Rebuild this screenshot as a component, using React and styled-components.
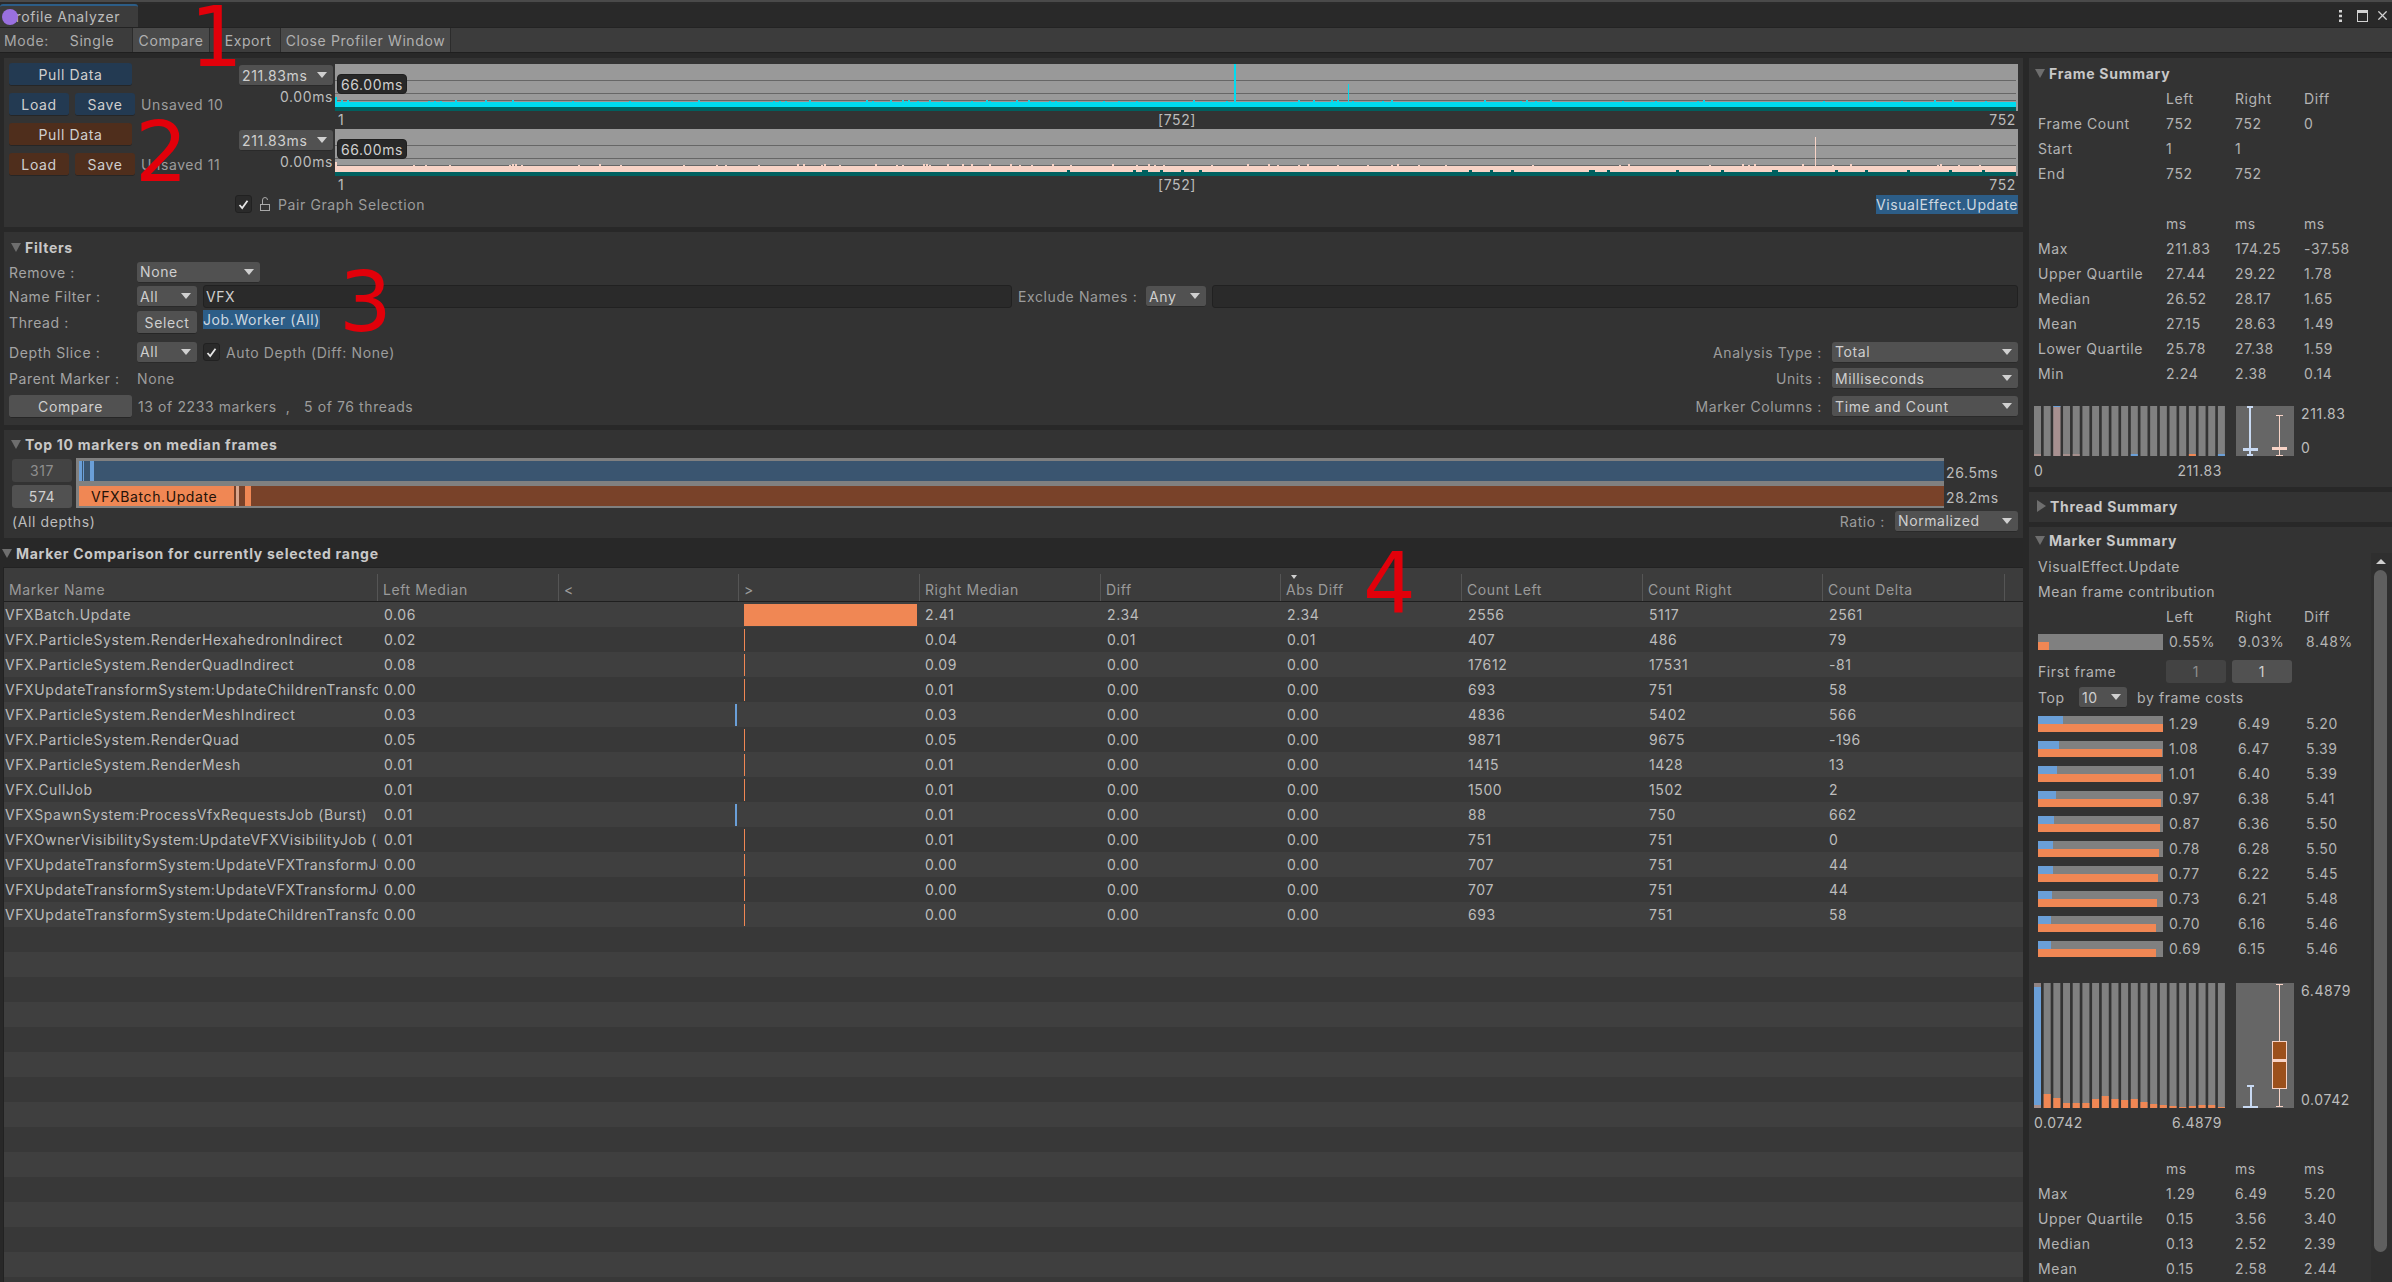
import React from "react";
import styled, { createGlobalStyle } from "styled-components";
import { X } from "lucide-react";

const TEXT = "#bcbcbc";
const BLUE = "#6a9fd8";
const ORANGE = "#f08754";
const PEACH = "#f8d3c6";
const PALE = "#c8d9f2";

const GlobalStyle = createGlobalStyle`
  html, body {
    margin: 0;
    background: #282828;
    overflow: hidden;
  }
  * { box-sizing: border-box; }
`;

const Page = styled.div`
  position: relative;
  width: 2392px;
  height: 1282px;
  overflow: hidden;
  display: flex;
  flex-direction: column;
  background: #282828;
  color: ${TEXT};
  font-family: Inter, "Liberation Sans", sans-serif;
  font-size: 14px;
  letter-spacing: 0.6px;
  white-space: nowrap;
`;

const TopEdge = styled.div`
  height: 4px;
  background: #2b2b2b;
  border-top: 2px solid #4a4a4a;
`;

const TabBar = styled.div`
  height: 23px;
  display: flex;
  align-items: stretch;
  justify-content: space-between;
  background: #292929;
`;

const Tab = styled.div`
  width: 138px;
  padding-left: 6px;
  display: flex;
  align-items: center;
  background: #3c3c3c;
  border-top: 2px solid #2c5d87;
  border-radius: 3px 3px 0 0;
`;

const WindowButtons = styled.div`
  display: flex;
  align-items: center;
  gap: 7px;
  padding-right: 2px;
  color: #d2d2d2;
`;

const Dots = styled.svg`
  margin-right: 8px;
`;

const Logo = styled.div`
  position: absolute;
  left: 2px;
  top: 9px;
  width: 16px;
  height: 16px;
  border-radius: 50%;
  background: #9a70e0;
`;

const Toolbar = styled.div`
  height: 26px;
  display: flex;
  align-items: stretch;
  background: #3c3c3c;
  border-top: 1px solid #232323;
  border-bottom: 1px solid #1f1f1f;
`;

const ToolLabel = styled.div`
  width: 52px;
  padding-left: 4px;
  display: flex;
  align-items: center;
  color: #a8a8a8;
`;

const ToolItem = styled.div`
  width: ${(p) => p.$w}px;
  padding-left: ${(p) => p.$pad || 0}px;
  display: flex;
  align-items: center;
  justify-content: center;
  background: ${(p) => (p.$on ? "#4a4a4a" : "transparent")};
  border-right: 1px solid #2c2c2c;
  color: #b0b0b0;
`;

const Body = styled.div`
  flex: 1;
  min-height: 0;
  display: flex;
`;

const LeftColumn = styled.div`
  width: 2029px;
  padding: 5px 6px 0 0;
  display: flex;
  flex-direction: column;
  gap: 5px;
`;

const Panel = styled.section`
  height: ${(p) => p.$h}px;
  margin-left: 4px;
  flex-shrink: 0;
  background: #333333;
`;

const CapturePanel = styled(Panel)`
  padding: 5px 0 0 5px;
  display: flex;
`;

const CaptureControls = styled.div`
  width: 226px;
  display: flex;
  flex-direction: column;
  gap: 7px;
`;

const ControlRow = styled.div`
  display: flex;
  align-items: center;
  gap: 6px;
  height: 23px;
`;

const Button = styled.div`
  width: ${(p) => p.$w}px;
  height: ${(p) => p.$h || 23}px;
  display: flex;
  align-items: center;
  justify-content: center;
  flex-shrink: 0;
  border-radius: 3px;
  background: ${(p) => p.$bg || "#515151"};
  border-bottom: 1px solid #262626;
  color: ${(p) => p.$color || "#cfcfcf"};
`;

const GraphColumn = styled.div`
  flex: 1;
  padding-top: 1px;
`;

const GraphBlock = styled.div`
  height: 65px;
  display: flex;
`;

const ScaleColumn = styled.div`
  width: 100px;
  padding: 1px 2px 0 2px;
  display: flex;
  flex-direction: column;
  align-items: flex-end;
  gap: 2px;
`;

const GraphArea = styled.div`
  position: relative;
  width: 1683px;
`;

const GraphCanvas = styled.svg`
  display: block;
  width: 1683px;
  height: 47px;
`;

const GraphTip = styled.div`
  position: absolute;
  left: 2px;
  top: 10px;
  height: 20px;
  padding: 0 3px;
  display: flex;
  align-items: center;
  border-radius: 4px;
  background: #282828;
  border: 1px solid #1f1f1f;
  color: #d0d0d0;
`;

const GraphAxis = styled.div`
  height: 12px;
  display: grid;
  grid-template-columns: 1fr auto 1fr;
  align-items: center;
  padding: 0 2px 0 3px;
`;

const AxisEnd = styled.span`
  justify-self: end;
`;

const PairRow = styled.div`
  height: 20px;
  margin-top: 0;
  padding-right: 5px;
  display: flex;
  align-items: center;
  gap: 8px;
`;

const Highlight = styled.span`
  height: 19px;
  display: inline-flex;
  align-items: center;
  align-self: ${(p) => (p.$raised ? "flex-start" : "center")};
  background: #2c5d87;
  color: #cfd8e0;
  margin-top: ${(p) => (p.$raised ? "1px" : "0")};
  margin-left: ${(p) => (p.$push ? "auto" : "0")};
`;

const Check = styled.div`
  width: 17px;
  height: 18px;
  display: flex;
  align-items: center;
  justify-content: center;
  flex-shrink: 0;
  border-radius: 3px;
  background: #2a2a2a;
  border: 1px solid #212121;
`;

const Dim = styled.span`
  color: #9c9c9c;
`;

const ExcludeLabel = styled(Dim)`
  width: 122px;
  flex-shrink: 0;
`;

const Select = styled.div`
  width: ${(p) => p.$w}px;
  height: ${(p) => p.$h || 21}px;
  padding: 0 6px 0 3px;
  display: flex;
  align-items: center;
  justify-content: space-between;
  flex-shrink: 0;
  border-radius: 3px;
  background: #515151;
  border-bottom: 1px solid #2a2a2a;
  color: #cfcfcf;
`;

const Caret = styled.i`
  width: 0;
  height: 0;
  border-left: 5px solid transparent;
  border-right: 5px solid transparent;
  border-top: 6px solid #d0d0d0;
`;

const FoldHeader = styled.div`
  height: ${(p) => p.$h || 22}px;
  padding-left: ${(p) => p.$pad ?? 7}px;
  display: flex;
  align-items: center;
  gap: 4px;
  font-weight: 700;
  letter-spacing: 0.72px;
  color: #c8c8c8;
`;

const Fold = styled.i`
  width: 0;
  height: 0;
  ${(p) =>
    p.$closed
      ? `border-top: 6px solid transparent; border-bottom: 6px solid transparent; border-left: 9px solid #6e6e6e;`
      : `border-left: 5px solid transparent; border-right: 5px solid transparent; border-top: 9px solid #6e6e6e;`}
`;

const FilterPanel = styled(Panel)`
  padding-top: 4px;
`;

const FilterRow = styled.div`
  height: ${(p) => p.$h}px;
  margin-top: ${(p) => p.$top || 0}px;
  padding: 0 5px;
  display: flex;
  align-items: center;
  gap: 6px;
`;

const FilterLabel = styled.div`
  width: 122px;
  color: #a4a4a4;
  flex-shrink: 0;
`;

const TextField = styled.div`
  height: 23px;
  padding-left: 2px;
  display: flex;
  align-items: center;
  flex: ${(p) => (p.$w ? `0 0 ${p.$w}px` : 1)};
  background: #2a2a2a;
  border: 1px solid #212121;
  border-radius: 3px;
  color: #cfcfcf;
`;

const RightBlock = styled.div`
  margin-left: auto;
  display: flex;
  align-items: center;
  gap: 10px;
`;

const MarkersPanel = styled(Panel)`
  padding-top: 3px;
`;

const MarkerStrip = styled.div`
  height: 50px;
  margin-top: 3px;
  padding-left: 8px;
  display: flex;
`;

const CountColumn = styled.div`
  width: 64px;
  padding-top: 1px;
  display: flex;
  flex-direction: column;
  gap: 3px;
`;

const CountBox = styled.div`
  width: 60px;
  height: 23px;
  display: flex;
  align-items: center;
  justify-content: center;
  border-radius: 3px;
  background: ${(p) => (p.$faded ? "#434343" : "#515151")};
  color: ${(p) => (p.$faded ? "#8e8e8e" : "#cfcfcf")};
`;

const StripBars = styled.div`
  width: 1868px;
  padding: 3px 0 2px 3px;
  display: flex;
  flex-direction: column;
  gap: 5px;
  background: #808080;
`;

const StripRow = styled.div`
  height: 20px;
  display: flex;
  background: ${(p) => p.$bg};
`;

const StripSegment = styled.div`
  width: ${(p) => p.$w}px;
  margin-right: ${(p) => p.$gap || 0}px;
  padding-left: ${(p) => (p.$label ? 12 : 0)}px;
  display: flex;
  align-items: center;
  flex-shrink: 0;
  background: ${(p) => p.$bg};
  color: #241208;
`;

const StripLabels = styled.div`
  padding: 3px 0 0 2px;
  display: flex;
  flex-direction: column;
  gap: 5px;
`;

const StripLabel = styled.div`
  height: 20px;
  display: flex;
  align-items: center;
  padding-top: 2px;
`;

const StripFooter = styled.div`
  height: 26px;
  padding: 0 5px 0 8px;
  display: flex;
  align-items: center;
  justify-content: space-between;
`;

const TableSection = styled.div`
  flex: 1;
  min-height: 0;
  display: flex;
  flex-direction: column;
`;

const TableTitle = styled.div`
  height: 24px;
  flex-shrink: 0;
`;

const Table = styled.div`
  flex: 1;
  min-height: 0;
  margin-left: 3px;
  overflow: hidden;
  border-top: 1px solid #222222;
  border-left: 1px solid #222222;
  background: #3c3c3c;
`;

const COLUMNS = "374px 181px 180px 181px 181px 180px 181px 181px 180px 182px 1fr";

const HeaderRow = styled.div`
  height: 34px;
  display: grid;
  grid-template-columns: ${COLUMNS};
  background: #3c3c3c;
  border-bottom: 1px solid #1f1f1f;
`;

const HeaderCell = styled.div`
  position: relative;
  margin-top: 6px;
  padding: 3px 0 0 5px;
  display: flex;
  align-items: center;
  border-right: 1px solid #555555;
  color: #9a9a9a;
`;

const SortMark = styled.i`
  position: absolute;
  left: 10px;
  top: 1px;
  width: 0;
  height: 0;
  border-left: 3px solid transparent;
  border-right: 3px solid transparent;
  border-top: 4px solid #cfcfcf;
`;

const DataRow = styled.div`
  height: 25px;
  display: grid;
  grid-template-columns: ${COLUMNS};
  background: ${(p) => (p.$odd ? "#383838" : "#3f3f3f")};
`;

const Cell = styled.div`
  padding-left: ${(p) => p.$pad ?? 6}px;
  display: flex;
  align-items: center;
  overflow: hidden;
`;

const NegativeCell = styled.div`
  padding-right: 2px;
  display: flex;
  align-items: center;
  justify-content: flex-end;
`;

const PositiveCell = styled.div`
  padding-left: 5px;
  display: flex;
  align-items: center;
`;

const DiffBar = styled.div`
  height: 22px;
  background: ${(p) => p.$color};
`;

const RightColumn = styled.div`
  flex: 1;
  padding-top: 5px;
  display: flex;
  flex-direction: column;
  gap: 5px;
`;

const SidePanel = styled.section`
  background: #333333;
  flex-shrink: 0;
`;

const FramePanel = styled(SidePanel)`
  height: 429px;
  padding-top: 5px;
`;

const ThreadPanel = styled(SidePanel)`
  padding-bottom: 2px;
`;

const MarkerPanel = styled(SidePanel)`
  flex: 1;
  min-height: 0;
  display: flex;
  flex-direction: column;
`;

const SummaryRow = styled.div`
  height: ${(p) => p.$h || 25}px;
  margin-top: ${(p) => p.$top || 0}px;
  padding-left: 9px;
  display: grid;
  grid-template-columns: 128px 69px 69px 1fr;
  align-items: center;
  color: #b4b4b4;
`;

const ValueCell = styled.div`
  padding-left: ${(p) => p.$pad || 0}px;
`;

const ChartRow = styled.div`
  margin-top: ${(p) => p.$top}px;
  padding-left: 5px;
  display: flex;
`;

const Histogram = styled.svg`
  display: block;
  width: 191px;
  height: ${(p) => p.$h}px;
`;

const BoxPlot = styled.svg`
  display: block;
  width: 58px;
  height: ${(p) => p.$h}px;
  margin-left: 11px;
  background: #666666;
`;

const BoxLabels = styled.div`
  padding-left: 7px;
  height: ${(p) => p.$h}px;
  display: flex;
  flex-direction: column;
  justify-content: space-between;
  line-height: 16px;
`;

const HistogramAxis = styled.div`
  width: 191px;
  height: 28px;
  margin-left: 5px;
  padding-right: 3px;
  display: flex;
  align-items: center;
  justify-content: space-between;
`;

const MarkerBody = styled.div`
  flex: 1;
  min-height: 0;
  display: flex;
`;

const MarkerContent = styled.div`
  flex: 1;
  min-width: 0;
  overflow: hidden;
`;

const ScrollTrack = styled.div`
  width: 21px;
  padding: 6px 4px 0 2px;
  display: flex;
  flex-direction: column;
  align-items: center;
  gap: 6px;
  background: #2f2f2f;
`;

const ScrollUp = styled.i`
  width: 0;
  height: 0;
  border-left: 5px solid transparent;
  border-right: 5px solid transparent;
  border-bottom: 5px solid #d0d0d0;
`;

const ScrollThumb = styled.div`
  width: 13px;
  height: 682px;
  border-radius: 7px;
  background: #5f5f5f;
`;

const TwinBar = styled.div`
  width: 125px;
  height: 16px;
  display: flex;
  flex-direction: column;
  background: #808080;
`;

const BarFill = styled.div`
  height: 8px;
  background: ${(p) => p.$color};
`;

const FrameInputs = styled.div`
  grid-column: 2 / 4;
  display: flex;
  gap: 6px;
`;

const FrameInput = styled.div`
  width: 60px;
  height: 23px;
  display: flex;
  align-items: center;
  justify-content: center;
  border-radius: 3px;
  background: ${(p) => (p.$faded ? "#434343" : "#515151")};
  color: ${(p) => (p.$faded ? "#8e8e8e" : "#d0d0d0")};
`;

const TopCell = styled.div`
  grid-column: 1 / 5;
  display: flex;
  align-items: center;
`;

const TopLabel = styled.span`
  width: 41px;
`;

const ByCosts = styled.span`
  margin-left: 10px;
`;

const Annotation = styled.div`
  position: absolute;
  left: ${(p) => p.$x}px;
  top: ${(p) => p.$y}px;
  font-family: "DejaVu Sans", sans-serif;
  font-size: 83px;
  line-height: 83px;
  letter-spacing: 0;
  color: #e2000a;
`;

const MARKERS = [
  ["VFXBatch.Update", "0.06", "2.41", "2.34", "2.34", "2556", "5117", "2561", "wide"],
  ["VFX.ParticleSystem.RenderHexahedronIndirect", "0.02", "0.04", "0.01", "0.01", "407", "486", "79", "pos"],
  ["VFX.ParticleSystem.RenderQuadIndirect", "0.08", "0.09", "0.00", "0.00", "17612", "17531", "-81", "pos"],
  ["VFXUpdateTransformSystem:UpdateChildrenTransformsJob (Burst)", "0.00", "0.01", "0.00", "0.00", "693", "751", "58", "pos"],
  ["VFX.ParticleSystem.RenderMeshIndirect", "0.03", "0.03", "0.00", "0.00", "4836", "5402", "566", "neg"],
  ["VFX.ParticleSystem.RenderQuad", "0.05", "0.05", "0.00", "0.00", "9871", "9675", "-196", "pos"],
  ["VFX.ParticleSystem.RenderMesh", "0.01", "0.01", "0.00", "0.00", "1415", "1428", "13", "pos"],
  ["VFX.CullJob", "0.01", "0.01", "0.00", "0.00", "1500", "1502", "2", "pos"],
  ["VFXSpawnSystem:ProcessVfxRequestsJob (Burst)", "0.01", "0.01", "0.00", "0.00", "88", "750", "662", "neg"],
  ["VFXOwnerVisibilitySystem:UpdateVFXVisibilityJob (Burst)", "0.01", "0.01", "0.00", "0.00", "751", "751", "0", "pos"],
  ["VFXUpdateTransformSystem:UpdateVFXTransformJob (Burst)", "0.00", "0.00", "0.00", "0.00", "707", "751", "44", "pos"],
  ["VFXUpdateTransformSystem:UpdateVFXTransformJob (Burst)", "0.00", "0.00", "0.00", "0.00", "707", "751", "44", "pos"],
  ["VFXUpdateTransformSystem:UpdateChildrenTransformsJob (Burst)", "0.00", "0.00", "0.00", "0.00", "693", "751", "58", "pos"],
];

const HEADERS = ["Marker Name", "Left Median", "<", ">", "Right Median", "Diff", "Abs Diff", "Count Left", "Count Right", "Count Delta"];

const FRAME_STATS = [
  ["Max", "211.83", "174.25", "-37.58"],
  ["Upper Quartile", "27.44", "29.22", "1.78"],
  ["Median", "26.52", "28.17", "1.65"],
  ["Mean", "27.15", "28.63", "1.49"],
  ["Lower Quartile", "25.78", "27.38", "1.59"],
  ["Min", "2.24", "2.38", "0.14"],
];

const MARKER_STATS = [
  ["Max", "1.29", "6.49", "5.20"],
  ["Upper Quartile", "0.15", "3.56", "3.40"],
  ["Median", "0.13", "2.52", "2.39"],
  ["Mean", "0.15", "2.58", "2.44"],
];

const FRAME_COSTS = [
  [25, 125, "1.29", "6.49", "5.20"],
  [21, 124, "1.08", "6.47", "5.39"],
  [19, 123, "1.01", "6.40", "5.39"],
  [18, 123, "0.97", "6.38", "5.41"],
  [16, 122, "0.87", "6.36", "5.50"],
  [15, 121, "0.78", "6.28", "5.50"],
  [15, 120, "0.77", "6.22", "5.45"],
  [14, 119, "0.73", "6.21", "5.48"],
  [13, 118, "0.70", "6.16", "5.46"],
  [13, 118, "0.69", "6.15", "5.46"],
];

// small seeded generator so the graph noise stays the same on every load
function noise(seed) {
  let s = seed;
  return () => {
    s = (s * 16807) % 2147483647;
    return s / 2147483647;
  };
}

function FrameGraph({ fill, baseTop, baseBottom, spikes, seed, chewed }) {
  const rand = noise(seed);
  const bumps = [];
  for (let x = 0; x < 1683; x += 3) {
    const r = rand();
    if (r > 0.9) bumps.push([x, baseTop - 1 - Math.floor(rand() * 2), 2]);
    if (chewed && x > 700 && r < 0.06) bumps.push([x, null, 3]);
  }
  return (
    <GraphCanvas viewBox="0 0 1683 47">
      <rect width="1683" height="47" fill="#999999" />
      {[16, 29, 36].map((y) => (
        <rect key={y} y={y} width="1681" height="1" fill="#666666" />
      ))}
      <rect y={baseTop} width="1681" height={baseBottom - baseTop} fill={fill} />
      <rect y={baseBottom} width="1681" height={47 - baseBottom} fill="#00605f" />
      {bumps.map(([x, top, w], i) =>
        top === null ? (
          <rect key={i} x={x} y={baseBottom - 2} width={w} height="2" fill="#00605f" />
        ) : (
          <rect key={i} x={x} y={top} width={w} height={baseTop - top} fill={fill} />
        )
      )}
      {spikes.map(([x, top, w]) => (
        <rect key={x} x={x} y={top} width={w} height={baseTop - top} fill={fill} />
      ))}
    </GraphCanvas>
  );
}

function CheckMark() {
  return (
    <svg width="11" height="11" viewBox="0 0 11 11">
      <path d="M1.5 6 L4.2 9 L9.5 1.8" fill="none" stroke="#e6e6e6" strokeWidth="1.8" />
    </svg>
  );
}

function LockIcon() {
  return (
    <svg width="10" height="14" viewBox="0 0 10 14">
      <rect x="0.5" y="7.5" width="9" height="6" fill="none" stroke="#a8a8a8" />
      <path d="M2.5 7 V3 A2.5 2.5 0 0 1 7.5 3" fill="none" stroke="#a8a8a8" />
    </svg>
  );
}

function DotsIcon() {
  return (
    <Dots width="3" height="12" viewBox="0 0 3 12">
      <rect width="3" height="2.5" fill="#d2d2d2" />
      <rect y="4.7" width="3" height="2.5" fill="#d2d2d2" />
      <rect y="9.5" width="3" height="2.5" fill="#d2d2d2" />
    </Dots>
  );
}

function MaximiseIcon() {
  return (
    <svg width="11" height="12" viewBox="0 0 11 12">
      <rect x="0.5" y="0.5" width="10" height="11" fill="none" stroke="#d2d2d2" />
      <rect width="11" height="3" fill="#d2d2d2" />
    </svg>
  );
}

function Bars({ height, bars }) {
  return (
    <Histogram $h={height} viewBox={`0 0 191 ${height}`}>
      {bars.map((segments, i) => {
        const x = i * 9.68;
        return (
          <g key={i}>
            <rect x={x} width="7" height={height} fill="#808080" />
            {segments.map(([y, h, color], k) => (
              <rect key={k} x={x} y={y} width="7" height={h} fill={color} />
            ))}
          </g>
        );
      })}
    </Histogram>
  );
}

const bottomSeg = (h, color, total) => [[total - h, h, color]];
const PINK = "#a68f8c";

const FRAME_HIST = Array.from({ length: 20 }, (_, i) => {
  if (i === 0 || i === 3 || i === 4) return bottomSeg(2, PINK, 50);
  if (i === 2) return [[0, 50, "#a89090"], [0, 1, BLUE]];
  if (i === 10 || i === 19) return bottomSeg(2, BLUE, 50);
  if (i === 16) return bottomSeg(2, ORANGE, 50);
  return [];
});

const COST_TOPS = [0, 14, 10, 5, 5, 5, 9, 12, 9, 8, 9, 6, 4, 3, 2, 1, 2, 3, 3, 1];
const COST_HIST = COST_TOPS.map((h, i) =>
  i === 0
    ? [[0, 4, "#8f8383"], [4, 118, BLUE], [122, 3, PINK]]
    : bottomSeg(h, ORANGE, 125)
);

function FramePlot() {
  return (
    <BoxPlot $h={50} viewBox="0 0 58 50">
      <rect x="13" width="2" height="50" fill={PALE} />
      <rect x="11" width="6" height="2" fill={PALE} />
      <rect x="11" y="48" width="6" height="2" fill={PALE} />
      <rect x="7" y="42" width="15" height="3" fill={PALE} />
      <rect x="43" y="9" width="1" height="41" fill={PEACH} />
      <rect x="40" y="9" width="7" height="1" fill={PEACH} />
      <rect x="40" y="49" width="7" height="1" fill={PEACH} />
      <rect x="36" y="41" width="15" height="3" fill={PEACH} />
    </BoxPlot>
  );
}

function CostPlot() {
  return (
    <BoxPlot $h={125} viewBox="0 0 58 125">
      <rect x="14" y="102" width="2" height="22" fill={PALE} />
      <rect x="11" y="102" width="7" height="2" fill={PALE} />
      <rect x="7" y="123" width="15" height="2" fill={PALE} />
      <rect x="43" y="1" width="1" height="123" fill={PEACH} />
      <rect x="40" y="1" width="7" height="1" fill={PEACH} />
      <rect x="40" y="123" width="7" height="1" fill={PEACH} />
      <rect x="36.5" y="58.5" width="14" height="47" fill="#9c501c" stroke={PEACH} />
      <rect x="36" y="76" width="15" height="3" fill={PEACH} />
    </BoxPlot>
  );
}

function Dropdown({ label, w, h }) {
  return (
    <Select $w={w} $h={h}>
      {label}
      <Caret />
    </Select>
  );
}

function GraphSection({ fill, baseTop, baseBottom, spikes, seed, chewed }) {
  return (
    <GraphBlock>
      <ScaleColumn>
        <Dropdown label="211.83ms" w={94} />
        <span>0.00ms</span>
      </ScaleColumn>
      <GraphArea>
        <FrameGraph
          fill={fill}
          baseTop={baseTop}
          baseBottom={baseBottom}
          spikes={spikes}
          seed={seed}
          chewed={chewed}
        />
        <GraphTip>66.00ms</GraphTip>
        <GraphAxis>
          <span>1</span>
          <span>[752]</span>
          <AxisEnd>752</AxisEnd>
        </GraphAxis>
      </GraphArea>
    </GraphBlock>
  );
}

function CapturePanelContent() {
  return (
    <CapturePanel $h={169}>
      <CaptureControls>
        <Button $w={123} $bg="#233a52">Pull Data</Button>
        <ControlRow>
          <Button $w={60} $bg="#233a52">Load</Button>
          <Button $w={60} $bg="#233a52">Save</Button>
          <Dim>Unsaved 10</Dim>
        </ControlRow>
        <Button $w={123} $bg="#4f2e1c">Pull Data</Button>
        <ControlRow>
          <Button $w={60} $bg="#4f2e1c">Load</Button>
          <Button $w={60} $bg="#4f2e1c">Save</Button>
          <Dim>Unsaved 11</Dim>
        </ControlRow>
      </CaptureControls>
      <GraphColumn>
        <GraphSection
          fill="#00dcf0"
          baseTop={38}
          baseBottom={43}
          seed={41}
          spikes={[[0, 33, 2], [899, 0, 2], [1013, 20, 1]]}
        />
        <GraphSection
          fill={PEACH}
          baseTop={37}
          baseBottom={43}
          seed={97}
          chewed
          spikes={[[0, 33, 2], [1480, 8, 1]]}
        />
        <PairRow>
          <Check><CheckMark /></Check>
          <LockIcon />
          <Dim>Pair Graph Selection</Dim>
          <Highlight $push>VisualEffect.Update</Highlight>
        </PairRow>
      </GraphColumn>
    </CapturePanel>
  );
}

function FiltersPanelContent() {
  return (
    <FilterPanel $h={193}>
      <FoldHeader><Fold /> Filters</FoldHeader>
      <FilterRow $h={24} $top={2}>
        <FilterLabel>Remove :</FilterLabel>
        <Dropdown label="None" w={123} />
      </FilterRow>
      <FilterRow $h={25}>
        <FilterLabel>Name Filter :</FilterLabel>
        <Dropdown label="All" w={60} />
        <TextField $w={809}>VFX</TextField>
        <ExcludeLabel>Exclude Names :</ExcludeLabel>
        <Dropdown label="Any" w={60} />
        <TextField>&nbsp;</TextField>
      </FilterRow>
      <FilterRow $h={27}>
        <FilterLabel>Thread :</FilterLabel>
        <Button $w={60}>Select</Button>
        <Highlight $raised>Job.Worker (All)</Highlight>
      </FilterRow>
      <FilterRow $h={24} $top={4}>
        <FilterLabel>Depth Slice :</FilterLabel>
        <Dropdown label="All" w={60} />
        <Check><CheckMark /></Check>
        <Dim>Auto Depth (Diff: None)</Dim>
        <RightBlock>
          <Dim>Analysis Type :</Dim>
          <Dropdown label="Total" w={186} />
        </RightBlock>
      </FilterRow>
      <FilterRow $h={29}>
        <FilterLabel>Parent Marker :</FilterLabel>
        <Dim>None</Dim>
        <RightBlock>
          <Dim>Units :</Dim>
          <Dropdown label="Milliseconds" w={186} />
        </RightBlock>
      </FilterRow>
      <FilterRow $h={27}>
        <Button $w={123}>Compare</Button>
        <Dim>13 of 2233 markers &nbsp;, &nbsp;&nbsp;5 of 76 threads</Dim>
        <RightBlock>
          <Dim>Marker Columns :</Dim>
          <Dropdown label="Time and Count" w={186} />
        </RightBlock>
      </FilterRow>
    </FilterPanel>
  );
}

function TopMarkersPanel() {
  return (
    <MarkersPanel $h={108}>
      <FoldHeader $h={22}><Fold /> Top 10 markers on median frames</FoldHeader>
      <MarkerStrip>
        <CountColumn>
          <CountBox $faded>317</CountBox>
          <CountBox>574</CountBox>
        </CountColumn>
        <StripBars>
          <StripRow $bg="#3a5570">
            <StripSegment $w={3} $gap={1} $bg={BLUE} />
            <StripSegment $w={1} $gap={6} $bg={BLUE} />
            <StripSegment $w={4} $bg={BLUE} />
          </StripRow>
          <StripRow $bg="#794229">
            <StripSegment $label $w={155} $gap={2} $bg={ORANGE}>VFXBatch.Update</StripSegment>
            <StripSegment $w={3} $gap={6} $bg="#d9a58c" />
            <StripSegment $w={6} $bg={ORANGE} />
          </StripRow>
        </StripBars>
        <StripLabels>
          <StripLabel>26.5ms</StripLabel>
          <StripLabel>28.2ms</StripLabel>
        </StripLabels>
      </MarkerStrip>
      <StripFooter>
        <span>(All depths)</span>
        <RightBlock>
          <Dim>Ratio :</Dim>
          <Dropdown label="Normalized" w={123} />
        </RightBlock>
      </StripFooter>
    </MarkersPanel>
  );
}

function MarkerTable() {
  const blanks = Array.from({ length: 15 });
  return (
    <Table>
      <HeaderRow>
        {HEADERS.map((h) => (
          <HeaderCell key={h}>
            {h === "Abs Diff" && <SortMark />}
            {h}
          </HeaderCell>
        ))}
      </HeaderRow>
      {MARKERS.map(([name, left, right, diff, abs, cl, cr, cd, bar], i) => (
        <DataRow key={i} $odd={i % 2 === 1}>
          <Cell $pad={1}>{name}</Cell>
          <Cell>{left}</Cell>
          <NegativeCell>{bar === "neg" && <DiffBar $color={BLUE} style={{ width: 2 }} />}</NegativeCell>
          <PositiveCell>
            {bar === "wide" && <DiffBar $color={ORANGE} style={{ width: 173 }} />}
            {bar === "pos" && <DiffBar $color={ORANGE} style={{ width: 1 }} />}
          </PositiveCell>
          <Cell $pad={5}>{right}</Cell>
          <Cell>{diff}</Cell>
          <Cell>{abs}</Cell>
          <Cell>{cl}</Cell>
          <Cell>{cr}</Cell>
          <Cell>{cd}</Cell>
          <Cell />
        </DataRow>
      ))}
      {blanks.map((_, i) => (
        <DataRow key={i} $odd={(i + MARKERS.length) % 2 === 1} />
      ))}
    </Table>
  );
}

function StatRows({ rows }) {
  return rows.map((row) => (
    <SummaryRow key={row[0]}>
      {row.map((v) => (
        <span key={v}>{v}</span>
      ))}
    </SummaryRow>
  ));
}

function ColumnHeads({ labels }) {
  return (
    <SummaryRow>
      <span />
      {labels.map((l, i) => (
        <span key={i}>{l}</span>
      ))}
    </SummaryRow>
  );
}

function FrameSummary() {
  return (
    <FramePanel>
      <FoldHeader $h={20} $pad={6}><Fold /> Frame Summary</FoldHeader>
      <SummaryRow $h={3} />
      <ColumnHeads labels={["Left", "Right", "Diff"]} />
      <StatRows rows={[["Frame Count", "752", "752", "0"]]} />
      <SummaryRow>
        <span>Start</span>
        <span>1</span>
        <span>1</span>
      </SummaryRow>
      <SummaryRow>
        <span>End</span>
        <span>752</span>
        <span>752</span>
      </SummaryRow>
      <SummaryRow />
      <ColumnHeads labels={["ms", "ms", "ms"]} />
      <StatRows rows={FRAME_STATS} />
      <ChartRow $top={20}>
        <Bars height={50} bars={FRAME_HIST} />
        <FramePlot />
        <BoxLabels $h={50}>
          <span>211.83</span>
          <span>0</span>
        </BoxLabels>
      </ChartRow>
      <HistogramAxis>
        <span>0</span>
        <span>211.83</span>
      </HistogramAxis>
    </FramePanel>
  );
}

function MarkerSummary() {
  return (
    <MarkerPanel>
      <FoldHeader $h={26} $pad={6}><Fold /> Marker Summary</FoldHeader>
      <MarkerBody>
        <MarkerContent>
          <SummaryRow $h={1} />
          <SummaryRow><TopCell>VisualEffect.Update</TopCell></SummaryRow>
          <SummaryRow><TopCell>Mean frame contribution</TopCell></SummaryRow>
          <ColumnHeads labels={["Left", "Right", "Diff"]} />
          <SummaryRow>
            <TwinBar>
              <BarFill $color="transparent" />
              <BarFill $color={ORANGE} style={{ width: 11 }} />
            </TwinBar>
            <ValueCell $pad={3}>0.55%</ValueCell>
            <ValueCell $pad={3}>9.03%</ValueCell>
            <ValueCell $pad={2}>8.48%</ValueCell>
          </SummaryRow>
          <SummaryRow $top={5}>
            <span>First frame</span>
            <FrameInputs>
              <FrameInput $faded>1</FrameInput>
              <FrameInput>1</FrameInput>
            </FrameInputs>
          </SummaryRow>
          <SummaryRow $h={27}>
            <TopCell>
              <TopLabel>Top</TopLabel>
              <Dropdown label="10" w={48} />
              <ByCosts>by frame costs</ByCosts>
            </TopCell>
          </SummaryRow>
          {FRAME_COSTS.map(([blue, orange, left, right, diff]) => (
            <SummaryRow key={left}>
              <TwinBar>
                <BarFill $color={BLUE} style={{ width: blue }} />
                <BarFill $color={ORANGE} style={{ width: orange }} />
              </TwinBar>
              <ValueCell $pad={3}>{left}</ValueCell>
              <ValueCell $pad={3}>{right}</ValueCell>
              <ValueCell $pad={2}>{diff}</ValueCell>
            </SummaryRow>
          ))}
          <ChartRow $top={22}>
            <Bars height={125} bars={COST_HIST} />
            <CostPlot />
            <BoxLabels $h={125}>
              <span>6.4879</span>
              <span>0.0742</span>
            </BoxLabels>
          </ChartRow>
          <HistogramAxis>
            <span>0.0742</span>
            <span>6.4879</span>
          </HistogramAxis>
          <SummaryRow $h={20} />
          <ColumnHeads labels={["ms", "ms", "ms"]} />
          <StatRows rows={MARKER_STATS} />
        </MarkerContent>
        <ScrollTrack>
          <ScrollUp />
          <ScrollThumb />
        </ScrollTrack>
      </MarkerBody>
    </MarkerPanel>
  );
}

export default function App() {
  return (
    <Page>
      <GlobalStyle />
      <TopEdge />
      <TabBar>
        <Tab>Profile Analyzer</Tab>
        <WindowButtons>
          <DotsIcon />
          <MaximiseIcon />
          <X size={15} strokeWidth={2} />
        </WindowButtons>
      </TabBar>
      <Toolbar>
        <ToolLabel>Mode:</ToolLabel>
        <ToolItem $w={81}>Single</ToolItem>
        <ToolItem $w={77} $on>Compare</ToolItem>
        <ToolItem $w={71} $pad={6}>Export</ToolItem>
        <ToolItem $w={170} $on>Close Profiler Window</ToolItem>
      </Toolbar>
      <Body>
        <LeftColumn>
          <CapturePanelContent />
          <FiltersPanelContent />
          <TopMarkersPanel />
          <TableSection>
            <TableTitle>
              <FoldHeader $h={20} $pad={2}><Fold /> Marker Comparison for currently selected range</FoldHeader>
            </TableTitle>
            <MarkerTable />
          </TableSection>
        </LeftColumn>
        <RightColumn>
          <FrameSummary />
          <ThreadPanel>
            <FoldHeader $h={28} $pad={8}><Fold $closed /> Thread Summary</FoldHeader>
          </ThreadPanel>
          <MarkerSummary />
        </RightColumn>
      </Body>
      <Logo />
      <Annotation $x={190} $y={-4}>1</Annotation>
      <Annotation $x={135} $y={111}>2</Annotation>
      <Annotation $x={339} $y={261}>3</Annotation>
      <Annotation $x={1363} $y={542}>4</Annotation>
    </Page>
  );
}
